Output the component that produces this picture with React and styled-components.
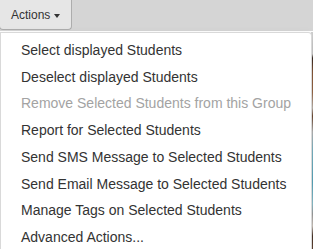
import React from "react";
import styled, { createGlobalStyle } from "styled-components";

const GlobalStyle = createGlobalStyle`
  html, body {
    margin: 0;
    padding: 0;
    background: #ffffff;
    font-family: "Liberation Sans", Arial, Helvetica, sans-serif;
    overflow: hidden;
  }
`;

const Page = styled.div`
  position: relative;
  width: 313px;
  height: 249px;
  overflow: hidden;
  display: flex;
  flex-direction: column;
`;

const Toolbar = styled.div`
  height: 31px;
  background: #d5d5d5;
  display: flex;
  align-items: flex-end;
  flex-shrink: 0;
`;

const ToggleButton = styled.button`
  display: flex;
  align-items: center;
  gap: 4px;
  width: 73px;
  height: 34px;
  margin: 0 0 1px -1px;
  padding: 5px 0 0 11px;
  background: #e6e6e6;
  border: 1px solid #adadad;
  border-top: none;
  border-radius: 0 0 4px 4px;
  color: #333333;
  font-family: inherit;
  font-size: 12px;
  cursor: pointer;
`;

const Caret = styled.span`
  display: inline-block;
  width: 0;
  height: 0;
  margin-top: 1px;
  border-top: 4px solid #333333;
  border-left: 3.5px solid transparent;
  border-right: 3.5px solid transparent;
`;

const Content = styled.div`
  flex: 1;
  display: flex;
  justify-content: flex-end;
  background: #ffffff;
`;

const PhotoEdge = styled.div`
  width: 2px;
  margin-top: 1px;
  background: linear-gradient(
    to bottom,
    #cfcfcf 0px,
    #cfcfcf 22px,
    #3a2a22 26px,
    #8a5a3a 40px,
    #9b6a48 60px,
    #c0b8b0 76px,
    #6f4a32 84px,
    #b9b9b9 100px,
    #7fb8c8 118px,
    #5aa9bf 150px,
    #8fc3d0 172px,
    #a0a0a0 182px,
    #d0c8c0 194px,
    #4a3428 204px,
    #6a4a38 218px
  );
`;

const Menu = styled.ul`
  position: absolute;
  top: 32px;
  left: 0;
  width: 310px;
  margin: 0;
  padding: 4px 0 5px;
  list-style: none;
  background: #ffffff;
  border: 1px solid rgba(0, 0, 0, 0.15);
  border-radius: 0 4px 4px 4px;
  box-shadow: 0 6px 12px rgba(0, 0, 0, 0.175);
`;

const MenuItem = styled.li`
  padding: 3px 20px;
  font-size: 14px;
  line-height: 20.7px;
  white-space: nowrap;
  color: ${({ disabled }) => (disabled ? "#a3a3a3" : "#333333")};
  cursor: ${({ disabled }) => (disabled ? "not-allowed" : "pointer")};
`;

const items = [
  { label: "Select displayed Students" },
  { label: "Deselect displayed Students" },
  { label: "Remove Selected Students from this Group", disabled: true },
  { label: "Report for Selected Students" },
  { label: "Send SMS Message to Selected Students" },
  { label: "Send Email Message to Selected Students" },
  { label: "Manage Tags on Selected Students" },
  { label: "Advanced Actions..." },
];

export default function App() {
  return (
    <>
      <GlobalStyle />
      <Page>
        <Toolbar>
          <ToggleButton type="button">
            Actions
            <Caret />
          </ToggleButton>
        </Toolbar>
        <Content>
          <PhotoEdge />
        </Content>
        <Menu>
          {items.map((item) => (
            <MenuItem key={item.label} disabled={item.disabled}>
              {item.label}
            </MenuItem>
          ))}
        </Menu>
      </Page>
    </>
  );
}
